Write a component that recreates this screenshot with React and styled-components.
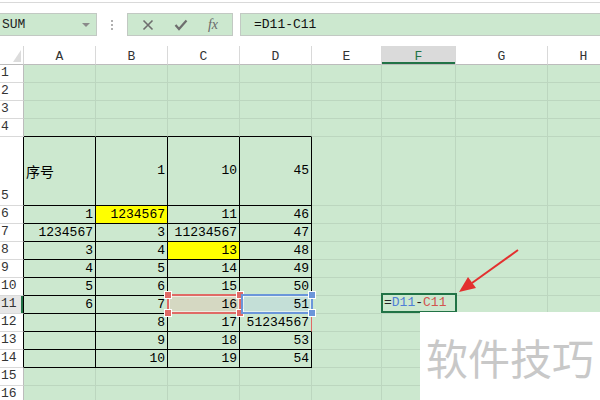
import React from "react";
import styled, { createGlobalStyle } from "styled-components";

const GREEN = "#cce8cf";
const GRID = "#bcd6bf";
const DARK_GREEN = "#217346";

const cols = [24, 72, 72, 72, 72, 70, 74, 92, 72];
const letters = ["A", "B", "C", "D", "E", "F", "G", "H"];
const rowHeights = [18, 18, 18, 18, 69, 18, 18, 18, 18, 18, 18, 18, 18, 18, 18, 18];

// table values for columns A-D
const data = {
  5: ["序号", "1", "10", "45"],
  6: ["1", "1234567", "11", "46"],
  7: ["1234567", "3", "11234567", "47"],
  8: ["3", "4", "13", "48"],
  9: ["4", "5", "14", "49"],
  10: ["5", "6", "15", "50"],
  11: ["6", "7", "16", "51"],
  12: ["", "8", "17", "51234567"],
  13: ["", "9", "18", "53"],
  14: ["", "10", "19", "54"],
};

const yellow = { "6-2": true, "8-3": true };

const GlobalStyle = createGlobalStyle`
  body {
    margin: 0;
    background: #fff;
    font-family: "Liberation Mono", monospace;
    overflow: hidden;
  }
`;

const Page = styled.div`
  position: relative;
  width: 600px;
  height: 400px;
  overflow: hidden;
  background: #fff;
`;

const FormulaBar = styled.div`
  box-sizing: border-box;
  border-top: 1px solid #d9d9d9;
  margin-top: 2px;
  padding-top: 10px;
  display: flex;
  align-items: flex-start;
  height: 44px;
`;

const Box = styled.div`
  height: 23px;
  box-sizing: border-box;
  background: ${GREEN};
  border: 1px solid #c2c9c3;
  display: flex;
  align-items: center;
`;

const NameBox = styled(Box)`
  width: 97px;
  border-left: none;
  padding: 0 6px 0 2px;
  justify-content: space-between;
  font-size: 13px;
  color: #222;
`;

const Caret = styled.span`
  width: 0;
  height: 0;
  border-left: 4px solid transparent;
  border-right: 4px solid transparent;
  border-top: 4px solid #8a8a8a;
`;

const Dots = styled.div`
  width: 30px;
  height: 23px;
  display: flex;
  flex-direction: column;
  align-items: center;
  justify-content: center;
  gap: 2px;
  span {
    width: 2px;
    height: 2px;
    background: #b0b0b0;
  }
`;

const ButtonBox = styled(Box)`
  width: 106px;
  justify-content: space-around;
  padding: 0 4px;
  color: #707070;
`;

const Fx = styled.span`
  font-family: "Liberation Serif", serif;
  font-style: italic;
  font-size: 14px;
  color: #6a6a6a;
`;

const FormulaInput = styled(Box)`
  flex: 1;
  margin-left: 7px;
  border-right: none;
  padding-left: 13px;
  font-size: 13px;
  color: #111;
`;

const Grid = styled.div`
  display: grid;
  grid-template-columns: ${cols.map((c) => c + "px").join(" ")};
  grid-template-rows: 19px ${rowHeights.map((h) => h + "px").join(" ")};
  width: 620px;
`;

const Corner = styled.div`
  background: #fff;
  border-right: 1px solid #d6d6d6;
  border-bottom: 1px solid #bcbcbc;
  position: relative;
  &::after {
    content: "";
    position: absolute;
    right: 2px;
    bottom: 2px;
    width: 0;
    height: 0;
    border-left: 8px solid transparent;
    border-bottom: 12px solid #dcdcdc;
  }
`;

const ColHead = styled.div`
  background: ${(p) => (p.$active ? "#dadada" : "#fff")};
  border-right: 1px solid #d9d9d9;
  border-bottom: 1px solid #bcbcbc;
  box-shadow: ${(p) => (p.$active ? `inset 0 -2px 0 ${DARK_GREEN}` : "none")};
  display: flex;
  align-items: center;
  justify-content: center;
  font-size: 13px;
  padding-top: 2px;
  color: ${(p) => (p.$active ? DARK_GREEN : "#333")};
`;

const RowHead = styled.div`
  background: ${(p) => (p.$active ? "#e6e6e6" : "#fff")};
  border-right: 1px solid ${(p) => p.$edge};
  border-bottom: 1px solid #d9d9d9;
  box-shadow: ${(p) => (p.$active ? `inset -2px 0 0 ${DARK_GREEN}` : "none")};
  display: flex;
  align-items: flex-end;
  padding: 0 0 1px 1px;
  font-size: 13px;
  color: #333;
  line-height: 16px;
`;

const Cell = styled.div`
  position: relative;
  background: ${(p) => p.$bg};
  border-right: 1px solid ${(p) => p.$right};
  border-bottom: 1px solid ${(p) => p.$bottom};
  display: flex;
  align-items: center;
  justify-content: ${(p) => (p.$left ? "flex-start" : "flex-end")};
  padding: ${(p) => (p.$left ? "0 0 0 2px" : "0 2px 0 0")};
  font-family: "Liberation Mono", "Noto Sans CJK SC", monospace;
  font-size: 13px;
  color: #000;
  white-space: nowrap;
  line-height: 16px;
`;

const Label = styled.span`
  font-family: "Noto Sans CJK SC", sans-serif;
  font-size: 14px;
`;

const Selection = styled.div`
  position: absolute;
  left: ${(p) => (p.$shift ? "1px" : "-1px")};
  top: -2px;
  right: -2px;
  bottom: -1px;
  border: 2px solid ${(p) => p.$color};
  box-shadow: inset 0 0 0 1px rgba(255, 255, 255, 0.55);
  pointer-events: none;
  z-index: 1;
`;

const Handle = styled.span`
  position: absolute;
  width: 6px;
  height: 6px;
  background: ${(p) => p.$color};
  border: 1px solid #fff;
  ${(p) => (p.$top ? "top: -5px;" : "bottom: -5px;")}
  ${(p) => (p.$leftSide ? "left: -5px;" : "right: -5px;")}
`;

const Editor = styled.div`
  position: absolute;
  left: -1px;
  top: -3px;
  width: 76px;
  height: 20px;
  box-sizing: border-box;
  border: 2px solid ${DARK_GREEN};
  background: ${GREEN};
  display: flex;
  align-items: center;
  padding-left: 1px;
  font-size: 13px;
  color: #222;
  z-index: 2;
`;

const Ref = styled.span`
  color: ${(p) => p.$color};
`;

const Watermark = styled.div`
  position: absolute;
  left: 420px;
  top: 312px;
  width: 180px;
  height: 88px;
  background: #fff;
  display: flex;
  align-items: center;
  padding-left: 6px;
  box-sizing: border-box;
  font-family: "Noto Sans CJK SC", "Noto Sans", sans-serif;
  font-size: 42px;
  color: #c8c8c8;
  z-index: 3;
`;

const Arrow = styled.svg`
  position: absolute;
  left: 0;
  top: 0;
  z-index: 4;
  pointer-events: none;
`;

function cellProps(r, c) {
  const inTable = r >= 5 && r <= 14 && c >= 1 && c <= 4;
  let right = GRID;
  let bottom = GRID;
  if (inTable) {
    right = "#000";
    bottom = "#000";
  }
  if (r === 4 && c >= 1 && c <= 4) bottom = "#000";
  if (r === 12 && c === 4) right = "#e06a66";
  let bg = GREEN;
  if (yellow[`${r}-${c}`]) bg = "#ffff00";
  if (r === 11 && c === 3) bg = "#d5d8c2";
  if (r === 11 && c === 4) bg = "#c4dfd7";
  return { right, bottom, bg };
}

const App = () => {
  const rows = rowHeights.map((_, i) => i + 1);
  return (
    <Page>
      <GlobalStyle />
      <FormulaBar>
        <NameBox>
          <span>SUM</span>
          <Caret />
        </NameBox>
        <Dots>
          <span />
          <span />
          <span />
        </Dots>
        <ButtonBox>
          <svg width="12" height="12" viewBox="0 0 12 12">
            <path d="M1.5 1.5 L10.5 10.5 M10.5 1.5 L1.5 10.5" stroke="#6e6e6e" strokeWidth="1.6" />
          </svg>
          <svg width="14" height="12" viewBox="0 0 14 12">
            <path d="M1.5 6 L5 10 L12.5 1.5" stroke="#6e6e6e" strokeWidth="2.2" fill="none" />
          </svg>
          <Fx>fx</Fx>
        </ButtonBox>
        <FormulaInput>=D11-C11</FormulaInput>
      </FormulaBar>
      <Grid>
        <Corner />
        {letters.map((l) => (
          <ColHead key={l} $active={l === "F"}>
            {l}
          </ColHead>
        ))}
        {rows.map((r) => (
          <React.Fragment key={r}>
            <RowHead $active={r === 11} $edge={r >= 5 && r <= 14 ? "#000" : "#bcbcbc"}>
              {r}
            </RowHead>
            {letters.map((l, i) => {
              const c = i + 1;
              const p = cellProps(r, c);
              const value = data[r] && c <= 4 ? data[r][c - 1] : "";
              const isLabel = value === "序号";
              return (
                <Cell key={l} $bg={p.bg} $right={p.right} $bottom={p.bottom} $left={isLabel}>
                  {isLabel ? <Label>{value}</Label> : value}
                  {r === 11 && c === 3 && (
                    <Selection $color="#e06a66">
                      <Handle $color="#e06a66" $top $leftSide />
                      <Handle $color="#e06a66" $top />
                      <Handle $color="#e06a66" $leftSide />
                      <Handle $color="#e06a66" />
                    </Selection>
                  )}
                  {r === 11 && c === 4 && (
                    <Selection $color="#6b96da" $shift>
                      <Handle $color="#6b96da" $top />
                      <Handle $color="#6b96da" />
                    </Selection>
                  )}
                  {r === 11 && c === 6 && (
                    <Editor>
                      =<Ref $color="#4f7fd6">D11</Ref>-<Ref $color="#d2554e">C11</Ref>
                    </Editor>
                  )}
                </Cell>
              );
            })}
          </React.Fragment>
        ))}
      </Grid>
      <Arrow width="600" height="400">
        <line x1="518" y1="250" x2="472" y2="283" stroke="#e3302f" strokeWidth="2" />
        <polygon points="459,292 476,288 468,277" fill="#e3302f" />
      </Arrow>
      <Watermark>软件技巧</Watermark>
    </Page>
  );
};

export default App;
